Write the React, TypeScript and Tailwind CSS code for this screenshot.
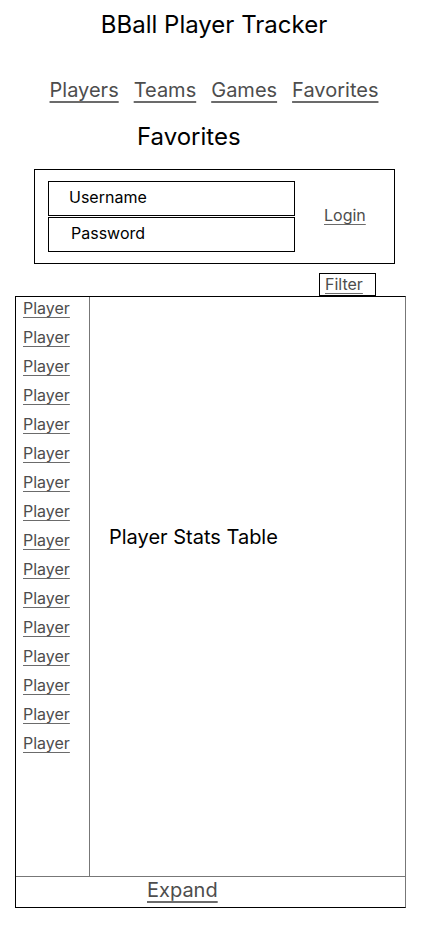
export default function App() {
  const players = Array.from({ length: 16 }, (_, i) => i)

  return (
    <div className="w-[428px] h-[926px] bg-white text-black font-['Inter',sans-serif] flex flex-col">
      <h1 className="mt-[10px] text-center text-[24px] leading-[29px]">BBall Player Tracker</h1>

      <nav className="mt-[39px] flex justify-center gap-[15px] text-[20px] leading-[24px] text-[#4d4d4d]">
        {['Players', 'Teams', 'Games', 'Favorites'].map((item) => (
          <a key={item} href="#" className="underline underline-offset-[4px] decoration-[#6b6b6b]">
            {item}
          </a>
        ))}
      </nav>

      <h2 className="mt-[20px] ml-[137px] text-[24px] leading-[29px]">Favorites</h2>

      <div className="mt-[18px] ml-[34px] w-[361px] h-[95px] border border-black flex items-center pl-[13px]">
        <div className="flex flex-col gap-[1px]">
          <div className="w-[247px] h-[35px] border border-black pl-[20px] text-[16px] leading-[30px]">Username</div>
          <div className="w-[247px] h-[35px] border border-black pl-[22px] text-[16px] leading-[30px]">Password</div>
        </div>
        <a href="#" className="ml-[29px] mb-[3px] text-[16px] leading-[20px] text-[#4d4d4d] underline underline-offset-[3px] decoration-[#6b6b6b]">
          Login
        </a>
      </div>

      <div className="mt-[9px] ml-[319px] w-[57px] h-[23px] border border-black pl-[5px] text-[16px] leading-[20px] text-[#4d4d4d]">
        <span className="underline underline-offset-[3px] decoration-[#6b6b6b]">Filter</span>
      </div>

      <div className="ml-[15px] w-[391px] h-[612px] border-y border-l border-r border-y-black border-l-black border-r-[#777] flex flex-col">
        <div className="flex flex-1">
          <div className="w-[74px] border-r border-[#777] pt-[1px] pl-[7px] flex flex-col gap-[9px]">
            {players.map((i) => (
              <a key={i} href="#" className="text-[16px] leading-[20px] text-[#4d4d4d] underline underline-offset-[3px] decoration-[#6b6b6b]">
                Player
              </a>
            ))}
          </div>
          <div className="flex-1 pt-[228px] pl-[19px] text-[20px] leading-[24px]">Player Stats Table</div>
        </div>
        <div className="h-[31px] border-t border-[#777] pl-[131px] pt-[1px] text-[20px] leading-[24px] text-[#4d4d4d]">
          <a href="#" className="underline underline-offset-[4px] decoration-[#6b6b6b]">Expand</a>
        </div>
      </div>
    </div>
  )
}
